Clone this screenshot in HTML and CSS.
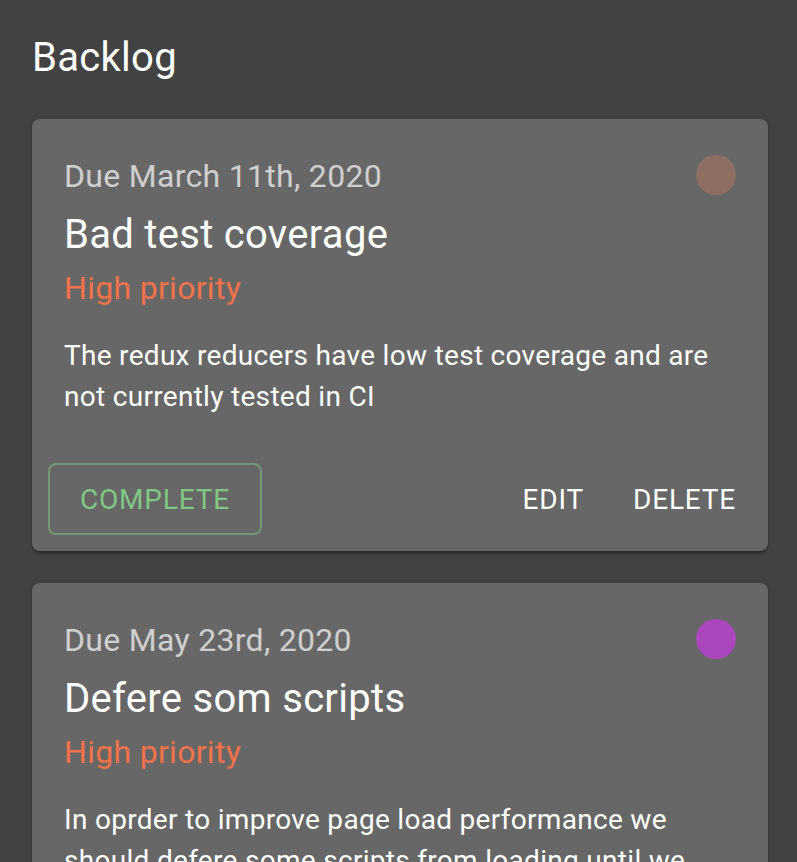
FILE: index.html
```html
<!DOCTYPE html>
<html lang="en">
<head>
<meta charset="utf-8">
<title>Backlog</title>
<link rel="stylesheet" href="styles.css">
</head>
<body>
<main class="page">
  <h1 class="page-title">Backlog</h1>
  <section class="list">
    <article class="card">
      <div class="card-content">
        <span class="dot dot-brown"></span>
        <div class="due">Due March 11th, 2020</div>
        <h2 class="title">Bad test coverage</h2>
        <div class="priority">High priority</div>
        <p class="desc">The redux reducers have low test coverage and are not currently tested in CI</p>
      </div>
      <div class="card-actions">
        <button class="btn btn-outlined">Complete</button>
        <div class="spacer"></div>
        <button class="btn btn-text">Edit</button>
        <button class="btn btn-text">Delete</button>
      </div>
    </article>
    <article class="card">
      <div class="card-content">
        <span class="dot dot-purple"></span>
        <div class="due">Due May 23rd, 2020</div>
        <h2 class="title">Defere som scripts</h2>
        <div class="priority">High priority</div>
        <p class="desc">In oprder to improve page load performance we should defere some scripts from loading until we need them</p>
      </div>
      <div class="card-actions">
        <button class="btn btn-outlined">Complete</button>
        <div class="spacer"></div>
        <button class="btn btn-text">Edit</button>
        <button class="btn btn-text">Delete</button>
      </div>
    </article>
  </section>
</main>
</body>
</html>
```
FILE: styles.css
```css
html, body {
  margin: 0;
  padding: 0;
  background: #424242;
}
body {
  font-family: Roboto, "Liberation Sans", Arial, sans-serif;
  color: #ffffff;
  -webkit-font-smoothing: antialiased;
}
.page {
  padding: 26px 29px 40px 32px;
}
.page-title {
  margin: 0 0 29px 0;
  font-size: 40px;
  line-height: 64px;
  font-weight: 400;
  letter-spacing: 0.0075em;
}
.list {
  display: flex;
  flex-direction: column;
  gap: 32px;
}
.card {
  background: #676767;
  border-radius: 8px;
  box-shadow: 0 4px 2px -2px rgba(0,0,0,0.2), 0 2px 2px 0 rgba(0,0,0,0.14), 0 2px 6px 0 rgba(0,0,0,0.12);
  overflow: hidden;
}
.card-content {
  position: relative;
  padding: 32px 32px 30px 32px;
}
.dot {
  position: absolute;
  top: 36px;
  right: 32px;
  width: 40px;
  height: 40px;
  border-radius: 50%;
}
.dot-brown { background: #8d6e63; }
.dot-purple { background: #ab47bc; }
.due {
  font-size: 32px;
  line-height: 50px;
  color: rgba(255,255,255,0.7);
  letter-spacing: 0.00938em;
}
.title {
  margin: 0;
  padding-top: 2px;
  font-size: 40px;
  line-height: 64px;
  font-weight: 400;
  letter-spacing: 0.0075em;
}
.priority {
  font-size: 32px;
  line-height: 42px;
  color: #f4734a;
  letter-spacing: 0.00938em;
}
.desc {
  margin: 26px 0 0;
  font-size: 28px;
  line-height: 41px;
  letter-spacing: 0.01071em;
}
.card-actions {
  display: flex;
  align-items: center;
  padding: 16px;
}
.spacer { flex: 1; }
.btn {
  font-family: inherit;
  font-size: 28px;
  line-height: 48px;
  font-weight: 400;
  text-transform: uppercase;
  letter-spacing: 0.02857em;
  background: transparent;
  cursor: pointer;
  border-radius: 8px;
  margin: 0;
}
.btn-outlined {
  color: #81c784;
  border: 2px solid rgba(129,199,132,0.5);
  padding: 11px 30px 9px;
}
.btn-text {
  color: #ffffff;
  border: 0;
  padding: 13px 16px 11px;
}
.btn-text + .btn-text {
  margin-left: 17px;
}
```
